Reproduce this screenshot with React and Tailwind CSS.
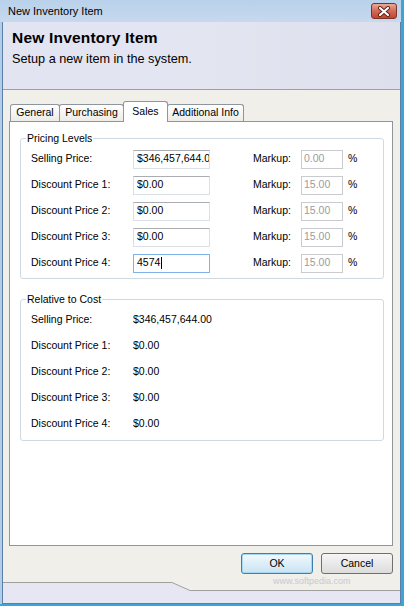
import React from "react";

const font = "font-['Liberation_Sans',Arial,sans-serif]";

const pricing = [
  { label: "Selling Price:", value: "$346,457,644.00", markup: "0.00" },
  { label: "Discount Price 1:", value: "$0.00", markup: "15.00" },
  { label: "Discount Price 2:", value: "$0.00", markup: "15.00" },
  { label: "Discount Price 3:", value: "$0.00", markup: "15.00" },
  { label: "Discount Price 4:", value: "4574", markup: "15.00", focused: true },
];

const relative = [
  { label: "Selling Price:", value: "$346,457,644.00" },
  { label: "Discount Price 1:", value: "$0.00" },
  { label: "Discount Price 2:", value: "$0.00" },
  { label: "Discount Price 3:", value: "$0.00" },
  { label: "Discount Price 4:", value: "$0.00" },
];

const GroupBox = ({ title, className, children }) => (
  <div className={`relative rounded-[3px] border border-[#cfd9e2] ${className}`}>
    <span className="absolute left-[5px] top-[-8px] bg-white px-[1px] text-[10.5px] leading-[14px]">
      {title}
    </span>
    {children}
  </div>
);

const TextBox = ({ value, focused }) => (
  <div
    className={`flex h-[19px] w-[77px] items-center overflow-hidden whitespace-nowrap border bg-white pl-[3px] text-[10.5px] ${
      focused
        ? "border-[#7eb4ea]"
        : "border-[#dbdfe6] border-t-[#abadb3]"
    }`}
  >
    {value}
    {focused && <span className="ml-[1px] inline-block h-[12px] w-px bg-black" />}
  </div>
);

const Tab = ({ label, width, selected }) =>
  selected ? (
    <div
      className={`relative z-10 -mb-px -ml-px flex h-[21px] items-start justify-center rounded-t-[3px] border border-b-0 border-[#8d969e] bg-white pt-[2px] text-[10.5px] ${width}`}
    >
      {label}
    </div>
  ) : (
    <div
      className={`-ml-px flex h-[17px] items-center justify-center rounded-t-[3px] border border-b-0 border-[#8d969e] bg-gradient-to-b from-white to-[#ecebe6] text-[10.5px] first:ml-0 ${width}`}
    >
      {label}
    </div>
  );

export default function App() {
  return (
    <div
      className={`${font} flex h-[606px] w-[404px] flex-col overflow-hidden border-r-[3px] border-b-2 border-r-[#3aa6d8] border-b-[#3aa6d8] bg-[#b2cdea] text-black`}
    >
      {/* title bar */}
      <div className="flex h-[22px] shrink-0 items-center justify-between bg-gradient-to-b from-[#b9d1ea] to-[#c6d9ee] pl-[8px] pr-[4px]">
        <span className="text-[11px]">New Inventory Item</span>
        <div className="flex h-[16px] w-[26px] items-center justify-center rounded-[3px] border border-[#7d3226] bg-gradient-to-b from-[#e9a99a] via-[#d06a56] to-[#c2452f]">
          <svg width="14" height="11" viewBox="0 0 14 11">
            <path d="M3 2 L11 9 M11 2 L3 9" stroke="#5a1c12" strokeWidth="4" strokeLinecap="round" />
            <path d="M3 2 L11 9 M11 2 L3 9" stroke="#fff" strokeWidth="2.2" strokeLinecap="round" />
          </svg>
        </div>
      </div>

      {/* window client */}
      <div className="ml-[2px] flex flex-1 flex-col border-x border-b border-[#5b7fa6] border-t-0">
        {/* header */}
        <div className="h-[68px] shrink-0 border-b border-[#a0a0a0] bg-gradient-to-r from-[#e2e4f1] via-[#e3e5f1] to-[#dde0ec] pl-[9px] pt-[6px]">
          <div className="text-[15.5px] font-bold leading-[19px] tracking-[0.2px]">New Inventory Item</div>
          <div className="mt-[4px] text-[12.7px] leading-[16px]">Setup a new item in the system.</div>
        </div>

        {/* body */}
        <div className="relative flex flex-1 flex-col bg-[#f0efe9] pl-[6px] pr-[7px] pt-[11px]">
          <div className="flex items-end pl-[1px]">
            <Tab label="General" width="w-[50px]" />
            <Tab label="Purchasing" width="w-[65px]" />
            <Tab label="Sales" width="w-[45px]" selected />
            <Tab label="Additional Info" width="w-[77px]" />
          </div>

          <div className="h-[425px] border border-[#8d969e] bg-white pl-[10px] pr-[8px] pt-[16px]">
            <GroupBox title="Pricing Levels" className="pb-[2px] pt-[7px]">
              {pricing.map((r) => (
                <div key={r.label} className="flex h-[26px] items-center pl-[10px] text-[10.5px]">
                  <span className="w-[102px]">{r.label}</span>
                  <TextBox value={r.value} focused={r.focused} />
                  <span className="ml-[43px] w-[48px]">Markup:</span>
                  <div className="flex h-[19px] w-[42px] items-center border border-[#c9cbcf] bg-white pl-[2px] text-[#9c9c9c]">
                    {r.markup}
                  </div>
                  <span className="ml-[5px]">%</span>
                </div>
              ))}
            </GroupBox>

            <GroupBox title="Relative to Cost" className="mt-[20px] pb-[3px] pt-[7px]">
              {relative.map((r) => (
                <div key={r.label} className="flex h-[26px] items-center pl-[10px] text-[10.5px]">
                  <span className="w-[102px]">{r.label}</span>
                  <span>{r.value}</span>
                </div>
              ))}
            </GroupBox>
          </div>

          <div className="mt-[7px] flex justify-end gap-[8px]">
            <button className="h-[21px] w-[72px] rounded-[3px] border border-[#3c7fb1] bg-gradient-to-b from-[#f2f9fd] to-[#c9e3f3] text-[10.5px] shadow-[inset_0_0_0_1px_#a6d8f3]">
              OK
            </button>
            <button className="h-[21px] w-[72px] rounded-[3px] border border-[#707070] bg-gradient-to-b from-[#f6f6f6] to-[#dcdcdc] text-[10.5px]">
              Cancel
            </button>
          </div>

          {/* watermark */}
          <span className="pointer-events-none absolute left-[270px] top-[486px] text-[9px] leading-[10px] text-[#c9c9d2]">
            www.softpedia.com
          </span>
        </div>

        {/* bottom strip */}
        <div className="flex h-[21px] shrink-0">
          <div className="w-[169px] border-t border-[#a0a0a0] bg-[#e6e7f3]" />
          <svg width="18" height="21" viewBox="0 0 18 21" className="shrink-0">
            <rect x="0" y="0" width="18" height="21" fill="#e6e7f3" />
            <polygon points="0,0 18,0 18,8.5 0,0" fill="#f0efe9" />
            <line x1="0" y1="0.5" x2="18" y2="8.5" stroke="#a0a0a0" strokeWidth="1" />
          </svg>
          <div className="flex flex-1 flex-col">
            <div className="h-[9px] border-b border-[#a0a0a0] bg-[#f0efe9]" />
            <div className="flex-1 bg-[#e6e7f3]" />
          </div>
        </div>
      </div>
    </div>
  );
}
